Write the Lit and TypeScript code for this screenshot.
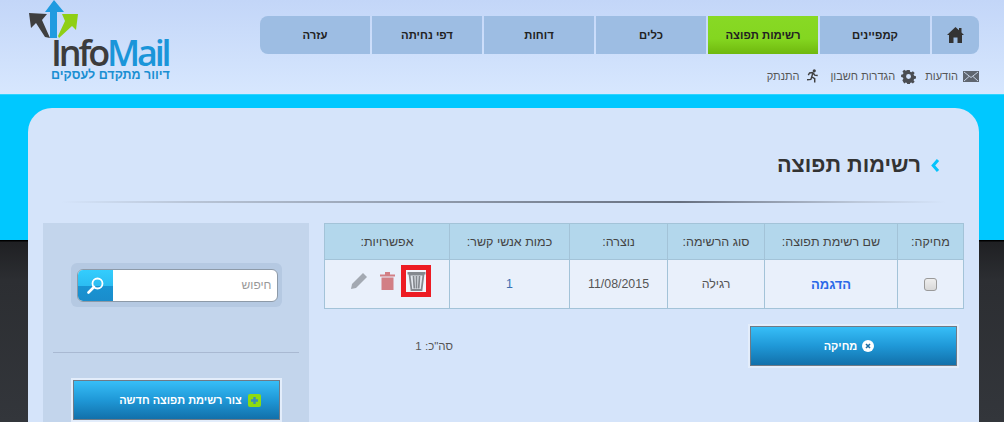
import { LitElement, html, css, svg } from "lit";
import { customElement } from "lit/decorators.js";

const navItems = ["קמפיינים", "רשימות תפוצה", "כלים", "דוחות", "דפי נחיתה", "עזרה"];

@customElement("app-root")
export class AppRoot extends LitElement {
  static styles = css`
    :host {
      display: block;
      width: 1004px;
      height: 422px;
      overflow: hidden;
      font-family: "Liberation Sans", Arial, sans-serif;
      color: #444;
      background: linear-gradient(#000 0, #000 1px, #1f2023 2px, #2c2e32 40px, #33363b 182px);
      background-size: 100% 182px;
      background-position: 0 240px;
      background-repeat: no-repeat;
      background-color: #33363b;
    }
    .top {
      height: 240px;
      background: #00c8ff;
    }
    .head {
      height: 95px;
      box-sizing: border-box;
      background: linear-gradient(#c3d6f8, #d7e7fe);
      border-bottom: 1px solid #2ed4ff;
      display: flex;
      padding: 0 25px 0 27px;
      justify-content: space-between;
    }
    .logo {
      width: 146px;
      height: 84px;
      display: flex;
      flex-direction: column;
    }
    .logo svg { display: block; height: 39px; width: 146px; flex: none; }
    .wordmark {
      font: 600 36px/26px "Open Sans", sans-serif;
      letter-spacing: -3.2px;
      color: #3c3c3c;
      margin: 1px 0 0 24px;
      height: 26px;
      white-space: nowrap;
    }
    .wordmark b { font-weight: 600; color: #1a95d9; }
    .tag {
      font: 700 12.5px/12px "Liberation Sans", sans-serif;
      color: #1a8fd2;
      width: 119px;
      margin: 3px 0 0 24px;
      text-align: center;
      white-space: nowrap;
    }
    .right {
      display: flex;
      flex-direction: column;
      align-items: flex-end;
      padding-top: 16px;
    }
    nav {
      display: flex;
      direction: rtl;
      gap: 2px;
      height: 38px;
      border-radius: 8px;
      overflow: hidden;
    }
    nav a {
      width: 110px;
      background: #9dbde3;
      color: #222;
      font-size: 11.3px;
      font-weight: 700;
      display: flex;
      align-items: center;
      justify-content: center;
    }
    nav a.home { width: 47px; }
    nav a.on { background: linear-gradient(#88d925 0, #84d620 60%, #6fb80e 100%); }
    .user {
      direction: rtl;
      display: flex;
      align-items: center;
      margin-top: 12px;
      font-size: 11px;
      color: #555;
      height: 20px;
    }
    .user svg { display: block; }
    .user .t1 { margin-right: 5px; }
    .user .gear { margin-right: 9px; }
    .user .t2 { margin-right: 6px; }
    .user .runner { margin-right: 12px; }
    .user .t3 { margin-right: 7px; }
    .card {
      margin: 13px 0 0 28px;
      width: 951px;
      height: 400px;
      box-sizing: border-box;
      background: #d5e4fa;
      border-radius: 24px 24px 0 0;
      direction: rtl;
      padding: 0 15px;
    }
    .title {
      display: flex;
      align-items: center;
      gap: 10px;
      height: 56px;
      padding-top: 29px;
      padding-right: 24px;
      font-size: 21.7px;
      font-weight: 700;
      color: #333;
      line-height: 56px;
    }
    .rule {
      height: 2px;
      margin: 8px 19px 0 18px;
      background: linear-gradient(90deg, transparent, #b8c4d6 15%, #666f7f 70%, #8a94a5 78%, #bcc8da 90%, transparent);
    }
    .cols {
      display: flex;
      margin-top: 20px;
      align-items: flex-start;
    }
    .main { width: 640px; }
    table {
      border-collapse: collapse;
      table-layout: fixed;
      width: 639px;
      font-size: 12.4px;
    }
    th, td {
      border: 1px solid #a3c3d8;
      text-align: center;
      padding: 0;
    }
    th {
      background: #b3d7ec;
      height: 35px;
      font-weight: 400;
      color: #444;
      font-size: 12.5px;
    }
    td { background: #e9f0fb; height: 48px; color: #555; }
    td.name { color: #2a68e8; font-weight: 700; font-size: 13px; }
    td.num { color: #3a6fb0; }
    .box {
      display: inline-block;
      width: 11px;
      height: 11px;
      border: 1px solid #9a9a9a;
      border-radius: 3px;
      background: linear-gradient(#eee, #d8d8d8);
      vertical-align: middle;
    }
    .ops {
      display: flex;
      align-items: center;
      padding: 0 18px 7px 0;
    }
    .ops svg { display: block; }
    .ops .red { margin-right: 6px; }
    .ops .pen { margin-right: 12px; }
    .hl {
      width: 30px;
      height: 32px;
      box-sizing: border-box;
      border: 5px solid #ed1c24;
      background: #f2f5fb;
      display: flex;
      align-items: center;
      justify-content: center;
    }
    .foot {
      display: flex;
      align-items: flex-start;
      margin-top: 15px;
      padding-right: 5px;
    }
    .btn {
      box-sizing: border-box;
      width: 211px;
      height: 44px;
      border: 2px solid #e3edfb;
      outline: 1px solid #6f7a86;
      outline-offset: -3px;
      background: linear-gradient(#38c0f9, #1f98d7 50%, #116ea8);
      color: #fff;
      font-size: 11px;
      font-weight: 700;
      display: flex;
      align-items: center;
      justify-content: center;
      gap: 6px;
    }
    .foot .btn { padding-right: 9px; gap: 5px; }
    .total {
      margin-right: 295px;
      margin-top: 16px;
      font-size: 11.5px;
      color: #555;
    }
    .side {
      width: 266px;
      height: 199px;
      margin-right: 15px;
      background: #c3d5ec;
      display: flex;
      flex-direction: column;
      align-items: center;
    }
    .sw {
      margin-top: 40px;
      width: 211px;
      height: 44px;
      box-sizing: border-box;
      padding: 6px 4px 6px 6px;
      background: #b5c9e2;
      border-radius: 6px;
    }
    .search {
      display: flex;
      height: 33px;
      box-sizing: border-box;
      border: 1px solid #8d9aa8;
      border-radius: 6px;
      background: #fff;
      overflow: hidden;
    }
    .search .txt {
      flex: 1;
      padding-right: 5px;
      font-size: 12px;
      line-height: 31px;
      color: #999;
    }
    .search .go {
      width: 35px;
      background: linear-gradient(#34cdfd 0, #2cbdf2 50%, #1994d3 51%, #1a8ccb 100%);
      display: flex;
      align-items: center;
      justify-content: center;
    }
    .divider {
      width: 246px;
      height: 1px;
      background: #a9b9d2;
      margin-top: 45px;
    }
    .side .btn { margin-top: 25px; padding-left: 28px; }
  `;

  greyTrash() {
    const c = "#85898f";
    return svg`<svg width="19" height="20" viewBox="0 0 19 20"><path d="M0.500 1h18v2.500h-18z" fill="${c}"/><path d="M2.500 3.500 L4.500 19 h10 L16.500 3.500 Z" fill="#e4e8ef" stroke="${c}" stroke-width="1.800"/><path d="M6.500 5l.8 12.500M9.500 5v12.500M12.500 5l-.8 12.500" stroke="${c}" stroke-width="1.700" fill="none"/></svg>`;
  }

  redTrash() {
    return svg`<svg class="red" width="15" height="18" viewBox="0 0 15 18"><path d="M0 2.500h15v2H0z M5 0h5v2.500H5z M1.500 5.500h12V18h-12z" fill="#d27f85"/></svg>`;
  }

  render() {
    return html`
      <div class="top">
        <div class="head">
          <div class="logo">
            <svg viewBox="0 0 146 39">
              <path d="M2 13 L20 14 L15 20 L23 38 L18 37 L9 23 L4 28 Z" fill="#3f3f3f"/>
              <path d="M18 12 L27 0 L37 12 H30 V38 H23 V12 Z" fill="#1f9be0"/>
              <path d="M35 14 H51 L49 30 L45 26 L32 38 L31 36 L38 21 Z" fill="#8fcf14"/>
            </svg>
            <div class="wordmark">Info<b>Mail</b></div>
            <div class="tag">דיוור מתקדם לעסקים</div>
          </div>
          <div class="right">
            <nav>
              <a class="home">
                <svg width="17" height="16" viewBox="0 0 17 16"><path d="M8.500 0 L12 3.200 V1 h2.500 V5.500 L17 8 H15 V16 H10.500 V10.500 H6.500 V16 H2 V8 H0 Z" fill="#333"/></svg>
              </a>
              ${navItems.map((n, i) => html`<a class=${i === 1 ? "on" : ""}>${n}</a>`)}
            </nav>
            <div class="user">
              <svg width="16" height="11" viewBox="0 0 16 11"><rect width="16" height="11" fill="#5f6670"/><path d="M1 1 L8 6.500 L15 1 M1 10 L6 5.500 M15 10 L10 5.500" fill="none" stroke="#c7d3e6" stroke-width="1"/></svg>
              <span class="t1">הודעות</span>
              <svg class="gear" width="15" height="15" viewBox="0 0 16 16"><path fill="#4a4d52" fill-rule="evenodd" d="M6.500 0h3l.4 2.200 1.500.7 1.900-1.300 2.100 2.100-1.300 1.900.7 1.500 2.200.4v3l-2.200.4-.7 1.500 1.300 1.900-2.100 2.100-1.900-1.300-1.500.7-.4 2.200h-3l-.4-2.200-1.500-.7-1.900 1.300L.5 12.500l1.300-1.900-.7-1.500L-1 8.700v-3l2.200-.4.7-1.500L.6 1.900 2.700-.2 4.600 1.100l1.500-.7zM8 5a3 3 0 100 6 3 3 0 000-6z" transform="translate(1 1) scale(.88)"/></svg>
              <span class="t2">הגדרות חשבון</span>
              <svg class="runner" width="12" height="16" viewBox="1 0 14 16"><circle cx="9.500" cy="2" r="1.800" fill="#3f3f3f"/><path d="M8 4 L4 4.500 L2.500 7 M8 4 L6.500 9 L10 11 L10 15.500 M6.500 9 L5.500 12 L1 12.500 M8 4 L10 7 L13.500 7.500" fill="none" stroke="#3f3f3f" stroke-width="1.700"/></svg>
              <span class="t3">התנתק</span>
            </div>
          </div>
        </div>
        <div class="card">
          <div class="title">
            <svg width="9" height="13" viewBox="0 0 9 13"><path d="M7 1 L2.200 6.500 L7 12" fill="none" stroke="#05c3fb" stroke-width="3"/></svg>
            <span>רשימות תפוצה</span>
          </div>
          <div class="rule"></div>
          <div class="cols">
            <div class="main">
              <table>
                <colgroup>
                  <col style="width:66px"/><col style="width:133px"/><col style="width:97px"/>
                  <col style="width:98px"/><col style="width:120px"/><col style="width:125px"/>
                </colgroup>
                <tr>
                  <th>מחיקה:</th><th>שם רשימת תפוצה:</th><th>סוג הרשימה:</th>
                  <th>נוצרה:</th><th>כמות אנשי קשר:</th><th>אפשרויות:</th>
                </tr>
                <tr>
                  <td><span class="box"></span></td>
                  <td class="name">הדגמה</td>
                  <td>רגילה</td>
                  <td>11/08/2015</td>
                  <td class="num">1</td>
                  <td>
                    <div class="ops">
                      <div class="hl">${this.greyTrash()}</div>
                      ${this.redTrash()}
                      <svg class="pen" width="18" height="18" viewBox="0 0 18 18"><path d="M13 1 L17 5 L6 16 L1 17 L2 12 Z" fill="#a3a9b2"/></svg>
                    </div>
                  </td>
                </tr>
              </table>
              <div class="foot">
                <div class="btn">
                  <svg width="12" height="12" viewBox="0 0 12 12"><circle cx="6" cy="6" r="6" fill="#fff"/><path d="M4 4l4 4M8 4l-4 4" stroke="#1d6ea5" stroke-width="1.600"/></svg>
                  <span>מחיקה</span>
                </div>
                <div class="total">סה"כ: 1</div>
              </div>
            </div>
            <div class="side">
              <div class="sw">
                <div class="search">
                  <div class="txt">חיפוש</div>
                  <div class="go">
                    <svg width="17" height="17" viewBox="0 0 17 17"><circle cx="10.500" cy="6.500" r="5" fill="none" stroke="#fff" stroke-width="1.800"/><path d="M7 10 L1.500 15.500" stroke="#fff" stroke-width="2.600" stroke-linecap="round"/></svg>
                  </div>
                </div>
              </div>
              <div class="divider"></div>
              <div class="btn">
                <svg width="13" height="13" viewBox="0 0 13 13"><rect width="13" height="13" rx="2" fill="#8edb10"/><path d="M6.500 3v7M3 6.500h7" stroke="#3b8fb5" stroke-width="2.400"/></svg>
                <span>צור רשימת תפוצה חדשה</span>
              </div>
            </div>
          </div>
        </div>
      </div>
    `;
  }
}
